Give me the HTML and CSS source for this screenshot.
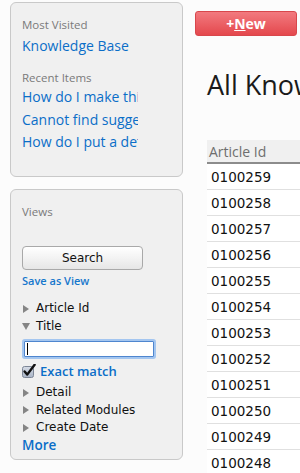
FILE: index.html
```html
<!DOCTYPE html>
<html>
<head>
<meta charset="utf-8">
<link rel="stylesheet" href="styles.css">
</head>
<body>
<div class="page">
  <aside class="sidebar">
    <section class="panel recent">
      <div class="label">Most Visited</div>
      <a class="link first" href="#">Knowledge Base</a>
      <div class="label gap">Recent Items</div>
      <a class="link clip" href="#">How do I make this work with the new module?</a>
      <a class="link clip" href="#">Cannot find suggested articles</a>
      <a class="link clip" href="#">How do I put a default value?</a>
    </section>
    <section class="panel views">
      <div class="label">Views</div>
      <button class="search-btn" type="button">Search</button>
      <a class="save" href="#">Save as View</a>
      <ul class="tree">
        <li class="node"><span class="tri right"></span>Article Id</li>
        <li class="node"><span class="tri down"></span>Title</li>
      </ul>
      <div class="field"><span class="caret"></span></div>
      <label class="exact">
        <svg class="check" width="14" height="14" viewBox="0 0 14 14">
          <defs>
            <linearGradient id="cb" x1="0" y1="0" x2="0" y2="1">
              <stop offset="0" stop-color="#d6dce6"/>
              <stop offset="1" stop-color="#a9b4c6"/>
            </linearGradient>
          </defs>
          <rect x="0.5" y="2.5" width="11" height="11" rx="2" fill="url(#cb)" stroke="#7d8696"/>
          <path d="M2.6 7.4 L5.2 10.6 L12.6 0.8" fill="none" stroke="#111" stroke-width="2.4" stroke-linecap="round" stroke-linejoin="round"/>
        </svg>
        <span>Exact match</span>
      </label>
      <ul class="tree">
        <li class="node"><span class="tri right"></span>Detail</li>
        <li class="node"><span class="tri right"></span>Related Modules</li>
        <li class="node"><span class="tri right"></span>Create Date</li>
      </ul>
      <a class="more" href="#">More</a>
    </section>
  </aside>
  <main class="main">
    <button class="new-btn" type="button">+<u>N</u>ew</button>
    <div class="title-clip">
      <h1 class="title">All Knowledge Base Articles</h1>
    </div>
    <div class="grid-clip">
      <table class="grid">
        <thead>
          <tr><th>Article Id</th><th>Title</th></tr>
        </thead>
        <tbody>
          <tr><td>0100259</td><td></td></tr>
          <tr><td>0100258</td><td></td></tr>
          <tr><td>0100257</td><td></td></tr>
          <tr><td>0100256</td><td></td></tr>
          <tr><td>0100255</td><td></td></tr>
          <tr><td>0100254</td><td></td></tr>
          <tr><td>0100253</td><td></td></tr>
          <tr><td>0100252</td><td></td></tr>
          <tr><td>0100251</td><td></td></tr>
          <tr><td>0100250</td><td></td></tr>
          <tr><td>0100249</td><td></td></tr>
          <tr><td>0100248</td><td></td></tr>
        </tbody>
      </table>
    </div>
  </main>
</div>
</body>
</html>
```
FILE: styles.css
```css
html, body {
  margin: 0;
  padding: 0;
  overflow: hidden;
  background: #fcfcfc;
  font-family: "Open Sans", "Liberation Sans", sans-serif;
}

.page {
  display: flex;
  width: 300px;
  overflow: hidden;
}

.sidebar {
  flex: 0 0 173px;
  padding-left: 10px;
  padding-top: 2px;
  display: flex;
  flex-direction: column;
  gap: 12px;
}

.panel {
  background: #f0f0f0;
  border: 1px solid #c9c9c9;
  border-radius: 6px;
  padding: 14px 11px 0 11px;
  display: flex;
  flex-direction: column;
  align-items: flex-start;
}

.recent {
  height: 159px;
}

.views {
  height: 255px;
}

.label {
  font-size: 11.5px;
  line-height: 16px;
  color: #7a7a7a;
}

.label.gap {
  margin-top: 13px;
}

.link {
  font-size: 14px;
  line-height: 22px;
  color: #0b6ec8;
  text-decoration: none;
  white-space: nowrap;
}

.link.first {
  margin-top: 2px;
}

.link.clip {
  width: 116px;
  overflow: hidden;
  line-height: 22.5px;
}

.search-btn {
  margin-top: 26px;
  width: 121px;
  height: 24px;
  border: 1px solid #a9a9a9;
  border-radius: 4px;
  background: linear-gradient(#ffffff, #f3f3f3 50%, #e6e6e6);
  font-family: "DejaVu Sans", sans-serif;
  font-size: 12px;
  color: #111;
  padding: 0;
}

.save {
  margin-top: 3px;
  font-size: 11px;
  line-height: 16px;
  font-weight: 600;
  color: #1677cc;
  text-decoration: none;
}

.tree {
  list-style: none;
  margin: 0;
  padding: 0;
}

.views .tree:first-of-type {
  margin-top: 11px;
}

.node {
  display: flex;
  align-items: center;
  font-family: "DejaVu Sans", sans-serif;
  font-size: 12px;
  line-height: 17.5px;
  color: #111;
}

.tri {
  width: 0;
  height: 0;
  margin-right: 6px;
}

.tri.right {
  margin-left: 1px;
  margin-right: 7px;
  border-top: 4px solid transparent;
  border-bottom: 4px solid transparent;
  border-left: 6px solid #858585;
}

.tri.down {
  border-left: 4px solid transparent;
  border-right: 4px solid transparent;
  border-top: 7px solid #858585;
  margin-right: 6px;
}

.field {
  margin-top: 6px;
  margin-left: 2px;
  width: 128px;
  height: 14px;
  background: #fff;
  border: 1px solid #4f86cf;
  box-shadow: 0 0 0 2px #a4c6f0;
  border-radius: 1px;
  display: flex;
  align-items: center;
}

.caret {
  width: 1px;
  height: 12px;
  margin-left: 2px;
  background: #000;
}

.exact {
  margin-top: 5px;
  display: flex;
  align-items: center;
  gap: 4px;
  font-size: 13px;
  line-height: 18px;
  font-weight: 600;
  color: #0b6ec8;
}

.check {
  flex: 0 0 14px;
}

.exact + .tree {
  margin-top: 4px;
}

.more {
  font-size: 13.5px;
  line-height: 17.5px;
  font-weight: 600;
  color: #0b6ec8;
  text-decoration: none;
}

.main {
  flex: 0 0 105px;
  margin-left: 12px;
  display: flex;
  flex-direction: column;
  align-items: flex-start;
  overflow: hidden;
}

.new-btn {
  flex: 0 0 auto;
  margin-top: 11px;
  width: 102px;
  height: 25px;
  border: 1px solid #d8474c;
  border-radius: 3px;
  background: linear-gradient(#f27a7f, #e4484d);
  color: #fff;
  font-family: "Open Sans", sans-serif;
  font-weight: 700;
  font-size: 14px;
  padding: 0;
}

.title-clip {
  align-self: stretch;
  overflow: hidden;
  margin-top: 32px;
  padding-left: 12px;
}

.title {
  margin: 0;
  font-size: 27px;
  line-height: 34px;
  font-weight: 400;
  color: #1a1a1a;
  white-space: nowrap;
}

.grid-clip {
  align-self: stretch;
  overflow: hidden;
  margin-top: 38px;
  padding-left: 12px;
}

.grid {
  width: 380px;
  border-collapse: collapse;
}

.grid th {
  text-align: left;
  background: #f0f0f0;
  font-size: 14px;
  font-weight: 400;
  color: #6e6e6e;
  height: 22px;
  padding: 0 0 0 2px;
  border-bottom: 2px solid #8c8c8c;
  white-space: nowrap;
}

.grid td {
  font-family: "DejaVu Sans", sans-serif;
  font-size: 13.5px;
  color: #111;
  height: 25px;
  padding: 0 0 0 4px;
  border-bottom: 1px solid #e0e0e0;
  background: #fff;
}

.grid td:first-child {
  width: 90px;
}
```
